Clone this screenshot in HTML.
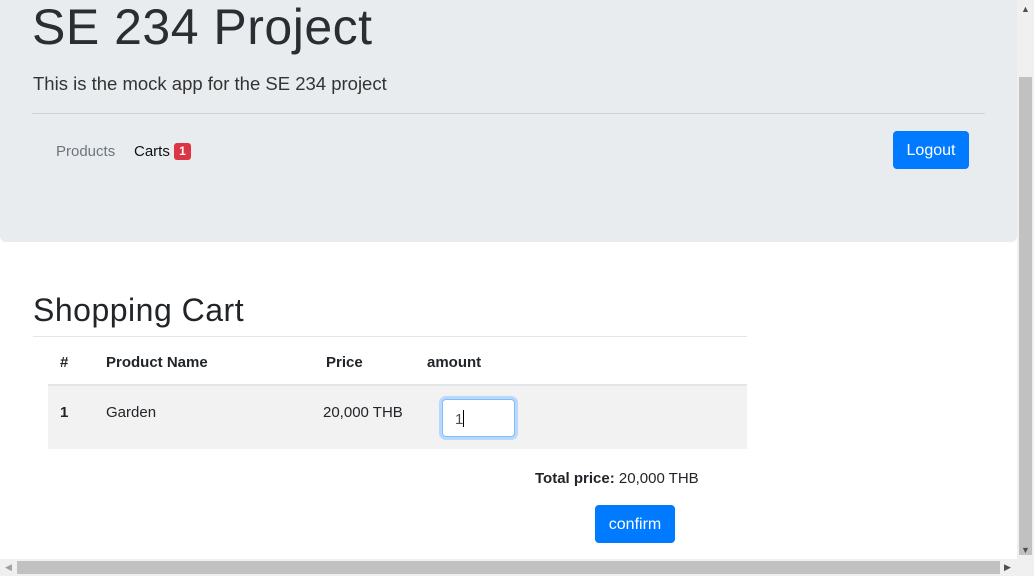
<!DOCTYPE html>
<html><head><style>
body{margin:0;width:1034px;height:576px;overflow:hidden;background:#fff;font-family:"Liberation Sans",sans-serif;color:#212529;position:relative}
.a{position:absolute;white-space:nowrap}
.jb{position:absolute;left:0;top:0;width:1017px;height:242px;background:#e9ecef;border-radius:0 0 6px 6px}
.btn{position:absolute;background:#007bff;color:#fff;border-radius:4px;font-size:16px;text-align:center}
</style></head><body>
<div class="jb"></div>
<div class="a" style="left:32px;top:-2px;font-size:50px;font-weight:300;color:#2a2e33;letter-spacing:0.5px">SE 234 Project</div>
<div class="a" style="left:33px;top:73px;font-size:18.5px;font-weight:300;color:#333">This is the mock app for the SE 234 project</div>
<div class="a" style="left:32px;top:113px;width:953px;height:1px;background:#d0d3d7"></div>
<div class="a" style="left:56px;top:143px;font-size:15px;color:#6c757d">Products</div>
<div class="a" style="left:134px;top:143px;font-size:15px;color:#111">Carts</div>
<div class="a" style="left:174px;top:143px;width:17px;height:17px;background:#dc3545;color:#fff;border-radius:3px;font-size:12px;font-weight:bold;text-align:center;line-height:17px">1</div>
<div class="btn" style="left:893px;top:131px;width:76px;height:38px;line-height:40px">Logout</div>
<div class="a" style="left:33px;top:292px;font-size:32px;font-weight:500;letter-spacing:0.5px">Shopping Cart</div>
<div class="a" style="left:33px;top:336px;width:714px;height:1px;background:#e3e5e8"></div>
<div class="a" style="left:48px;top:384px;width:699px;height:2px;background:#e3e5e8"></div>
<div class="a" style="left:48px;top:386px;width:699px;height:63px;background:#f2f2f2"></div>
<div class="a" style="left:60px;top:354px;font-size:15px;font-weight:bold">#</div>
<div class="a" style="left:106px;top:354px;font-size:15px;font-weight:bold">Product Name</div>
<div class="a" style="left:326px;top:354px;font-size:15px;font-weight:bold">Price</div>
<div class="a" style="left:427px;top:354px;font-size:15px;font-weight:bold">amount</div>
<div class="a" style="left:60px;top:404px;font-size:15px;font-weight:bold">1</div>
<div class="a" style="left:106px;top:404px;font-size:15px">Garden</div>
<div class="a" style="left:323px;top:404px;font-size:15px">20,000 THB</div>
<div class="a" style="left:442px;top:399px;width:71px;height:36px;border:1px solid #80bdff;box-shadow:0 0 0 3px #b8d8fd;border-radius:4px;background:#fff"></div>
<div class="a" style="left:455px;top:410px;font-size:15px;color:#495057">1<span style="display:inline-block;width:1px;height:17px;background:#000;vertical-align:-3px"></span></div>
<div class="a" style="left:535px;top:470px;font-size:15px"><b>Total price:</b> 20,000 THB</div>
<div class="btn" style="left:595px;top:505px;width:80px;height:38px;line-height:40px">confirm</div>
<div class="a" style="left:1017px;top:0;width:17px;height:559px;background:#f0f0f0"></div>
<div class="a" style="left:1019px;top:77px;width:13px;height:478px;background:#c1c1c1"></div>
<div class="a" style="left:0;top:559px;width:1034px;height:17px;background:#f0f0f0"></div>
<div class="a" style="left:17px;top:561px;width:983px;height:13px;background:#c1c1c1"></div>
<div class="a" style="left:5px;top:562px;font-size:9px;color:#a0a0a0">◀</div>
<div class="a" style="left:1004px;top:562px;font-size:9px;color:#505050">▶</div>
<div class="a" style="left:1021px;top:4px;font-size:9px;color:#505050">▲</div>
<div class="a" style="left:1021px;top:545px;font-size:9px;color:#505050">▼</div>
</body></html>
